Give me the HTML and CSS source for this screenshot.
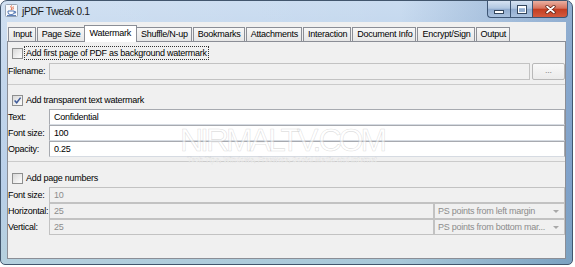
FILE: index.html
```html
<!DOCTYPE html>
<html lang="en">
<head>
  <meta charset="UTF-8">
  <title>jPDF Tweak 0.1</title>
  <link rel="stylesheet" href="styles.css">
</head>
<body>

  <div class="window">

    <!-- Title bar -->
    <div class="titlebar">
      <svg class="app-icon" width="13" height="13" viewBox="0 0 13 13">
        <rect x="0.5" y="0.5" width="12" height="12" rx="1" fill="#f7f9fc" stroke="#9aa6b4"/>
        <path d="M6.5 1.5 C4.5 3 8 4 6 6.2 M8.3 2.5 C7.2 3.5 9 4.3 7.8 5.6" fill="none" stroke="#e2582c" stroke-width="1"/>
        <path d="M3 7 H9.2 V8.2 A2.3 2.3 0 0 1 6.9 10.5 H5.3 A2.3 2.3 0 0 1 3 8.2 Z" fill="#ffffff" stroke="#3d66a8" stroke-width="0.9"/>
        <path d="M9.2 7.6 H10.6 V9 H9" fill="none" stroke="#3d66a8" stroke-width="0.8"/>
        <path d="M2 11.6 H11" stroke="#3d66a8" stroke-width="0.9"/>
      </svg>
      <span class="title">jPDF Tweak 0.1</span>
      <div class="caps">
        <span class="cap min"><span class="min-glyph"></span></span>
        <span class="cap max"><span class="max-glyph"></span></span>
        <span class="cap close">
          <svg width="11" height="9" viewBox="0 0 11 9">
            <path d="M2 1.5 L9 7.5 M9 1.5 L2 7.5" stroke="#5b1d12" stroke-width="3.2" stroke-linecap="round"/>
            <path d="M2 1.5 L9 7.5 M9 1.5 L2 7.5" stroke="#ffffff" stroke-width="1.7" stroke-linecap="round"/>
          </svg>
        </span>
      </div>
    </div>

    <!-- Client area -->
    <div class="client">
      <div class="tabs">
        <span class="tab">Input</span>
        <span class="tab">Page Size</span>
        <span class="tab active">Watermark</span>
        <span class="tab">Shuffle/N-up</span>
        <span class="tab">Bookmarks</span>
        <span class="tab">Attachments</span>
        <span class="tab">Interaction</span>
        <span class="tab">Document Info</span>
        <span class="tab">Encrypt/Sign</span>
        <span class="tab">Output</span>
      </div>

      <div class="panel">
        <!-- Background watermark -->
        <div class="section first">
          <div class="check-row">
            <span class="box"></span>
            <span class="focus">Add first page of PDF as background watermark</span>
          </div>
          <div class="field-row file-row">
            <span class="lbl">Filename:</span>
            <span class="field off"></span>
            <span class="dots-btn">...</span>
          </div>
        </div>

        <!-- Text watermark -->
        <div class="section second">
          <div class="check-row">
            <span class="box">
              <svg width="9" height="9" viewBox="0 0 9 9">
                <path d="M1.6 4.4 L3.7 6.8 L7.6 1.6" fill="none" stroke="#3f5b9a" stroke-width="1.5"/>
              </svg>
            </span>
            <span class="plain">Add transparent text watermark</span>
          </div>
          <div class="fields">
            <div class="field-row">
              <span class="lbl">Text:</span>
              <span class="field">Confidential</span>
            </div>
            <div class="field-row">
              <span class="lbl">Font size:</span>
              <span class="field">100</span>
            </div>
            <div class="field-row">
              <span class="lbl">Opacity:</span>
              <span class="field">0.25</span>
            </div>
          </div>
        </div>

        <!-- Page numbers -->
        <div class="section third">
          <div class="check-row">
            <span class="box"></span>
            <span class="plain">Add page numbers</span>
          </div>
          <div class="fields">
            <div class="field-row">
              <span class="lbl">Font size:</span>
              <span class="field off">10</span>
            </div>
            <div class="field-row">
              <span class="lbl">Horizontal:</span>
              <span class="field off">25</span>
              <span class="combo">PS points from left margin<span class="arrow"></span></span>
            </div>
            <div class="field-row">
              <span class="lbl">Vertical:</span>
              <span class="field off">25</span>
              <span class="combo">PS points from bottom mar...<span class="arrow"></span></span>
            </div>
          </div>
        </div>
      </div>

      <!-- site stamp lying over the screenshot -->
      <div class="site-mark">
        <div class="site-name">NIRMALTV.COM</div>
        <div class="site-tag">Tech Tips, Windows, Freeware, Social Media and Internet</div>
      </div>
    </div>

  </div>

</body>
</html>
```

FILE: styles.css
```css
body {
  margin: 0;
  padding: 0;
  background: #ffffff;
  font-family: "Liberation Sans", Arial, sans-serif;
  color: #000;
}

/* Aero window frame */
.window {
  width: 573px;
  height: 265px;
  box-sizing: border-box;
  border: 1px solid #42566d;
  border-radius: 7px 7px 5px 5px;
  background:
    linear-gradient(to right, rgba(255,255,255,0.15), rgba(255,255,255,0) 70%, rgba(40,90,150,0.35)),
    linear-gradient(#cadcf0, #b8cfe9 30%, #adc7e5 70%, #a8c8d8);
  padding: 0 6px 5px;
  display: flex;
  flex-direction: column;
}

.titlebar {
  height: 21px;
  margin: 0 -6px;
  padding: 0 4px;
  display: flex;
  align-items: flex-start;
}

.app-icon {
  margin-top: 3px;
  flex-shrink: 0;
}

.title {
  margin-left: 4px;
  font-size: 10.5px;
  line-height: 20px;
  letter-spacing: -0.45px;
  color: #1b1b1b;
}

/* caption buttons */
.caps {
  margin-left: auto;
  display: flex;
  height: 17px;
}

.cap {
  box-sizing: border-box;
  height: 17px;
  border: 1px solid #3d5574;
  border-top: 0;
  background: linear-gradient(#d5e2f2, #b1c7e1 45%, #91accf 52%, #a9c1de);
  display: flex;
  align-items: center;
  justify-content: center;
}

.cap.min {
  width: 23px;
  border-right: 0;
  border-radius: 0 0 0 4px;
}

.cap.max {
  width: 23px;
}

.cap.close {
  width: 35px;
  border-left: 0;
  border-radius: 0 0 4px 0;
  background: linear-gradient(#eab0a2, #d7735d 45%, #c33e22 52%, #d45a3e);
}

.min-glyph {
  width: 8px;
  height: 2px;
  margin-top: 6px;
  background: #fff;
  outline: 1px solid #34475e;
}

.max-glyph {
  width: 6px;
  height: 4px;
  border: 1px solid #fff;
  border-top-width: 2px;
  outline: 1px solid #34475e;
}

/* Client area */
.client {
  flex: 1;
  position: relative;
  background: #f0f0f0;
  display: flex;
  flex-direction: column;
  font-size: 9px;
  letter-spacing: -0.25px;
}

.tabs {
  height: 19px;
  padding-left: 1px;
  display: flex;
  align-items: flex-end;
}

.tab {
  height: 14px;
  box-sizing: border-box;
  padding: 0 3px 0 4px;
  margin-right: 1px;
  border: 1px solid #8b8e96;
  border-bottom: 0;
  background: linear-gradient(#f7f7f7, #e6e6e6);
  line-height: 13px;
  white-space: nowrap;
}

.tab.active {
  height: 17px;
  margin: 0 -1px -1px -2px;
  padding: 0 5px;
  background: #ffffff;
  line-height: 14px;
  position: relative;
  z-index: 1;
}

.panel {
  flex: 1;
  border: 1px solid #8b8e96;
  display: flex;
  flex-direction: column;
}

.section {
  border-bottom: 1px solid #cbcbcb;
}

.section.first {
  height: 43px;
  padding-top: 4px;
  box-sizing: border-box;
}

.section.second {
  height: 77px;
  padding-top: 8px;
  box-sizing: border-box;
}

.section.third {
  flex: 1;
  border-bottom: 0;
  padding-top: 9px;
}

/* checkbox rows */
.check-row {
  height: 14px;
  padding-left: 4px;
  display: flex;
  align-items: center;
}

.box {
  width: 11px;
  height: 11px;
  box-sizing: border-box;
  border: 1px solid #8e8f8f;
  background: linear-gradient(135deg, #d8d8d8, #f7f7f7 80%);
  margin-right: 1px;
  display: flex;
  align-items: center;
  justify-content: center;
}

.focus {
  border: 1px dotted #333;
  padding: 0 1px;
  line-height: 12px;
}

.plain {
  padding-left: 2px;
}

/* labelled fields */
.fields {
  margin-top: 2px;
}

.field-row {
  height: 16px;
  display: flex;
}

.file-row {
  height: 17px;
  margin-top: 3px;
}

.lbl {
  width: 41px;
  flex-shrink: 0;
  line-height: 16px;
  white-space: nowrap;
}

.field {
  flex: 1;
  box-sizing: border-box;
  border: 1px solid #a7aab0;
  border-bottom-color: #d6dbe2;
  background: #ffffff;
  padding-left: 4px;
  line-height: 14px;
}

.field.off {
  background: #f0f0f0;
  border-color: #c2c2c2;
  color: #8c8c8c;
}

.dots-btn {
  width: 33px;
  margin-left: 2px;
  box-sizing: border-box;
  border: 1px solid #b8b8b8;
  border-radius: 2px;
  background: linear-gradient(#f8f8f8, #ebebeb);
  color: #8a8a8a;
  text-align: center;
  line-height: 13px;
}

.combo {
  width: 131px;
  box-sizing: border-box;
  border: 1px solid #c2c2c2;
  background: #f0f0f0;
  color: #8c8c8c;
  padding-left: 3px;
  line-height: 14px;
  white-space: nowrap;
  display: flex;
  align-items: center;
}

.arrow {
  margin-left: auto;
  margin-right: 5px;
  width: 0;
  height: 0;
  border-left: 3px solid transparent;
  border-right: 3px solid transparent;
  border-top: 3px solid #a8a8a8;
}

/* faint site stamp over the picture */
.site-mark {
  position: absolute;
  left: 173px;
  top: 102px;
  pointer-events: none;
  text-align: center;
}

.site-name {
  font-size: 32px;
  line-height: 32px;
  letter-spacing: -3px;
  color: rgba(255, 255, 255, 0.55);
  -webkit-text-stroke: 0.6px rgba(160, 160, 160, 0.35);
}

.site-tag {
  font-size: 7px;
  font-weight: bold;
  letter-spacing: 0;
  color: rgba(255, 255, 255, 0.7);
  -webkit-text-stroke: 0.3px rgba(150, 150, 150, 0.3);
}
```
